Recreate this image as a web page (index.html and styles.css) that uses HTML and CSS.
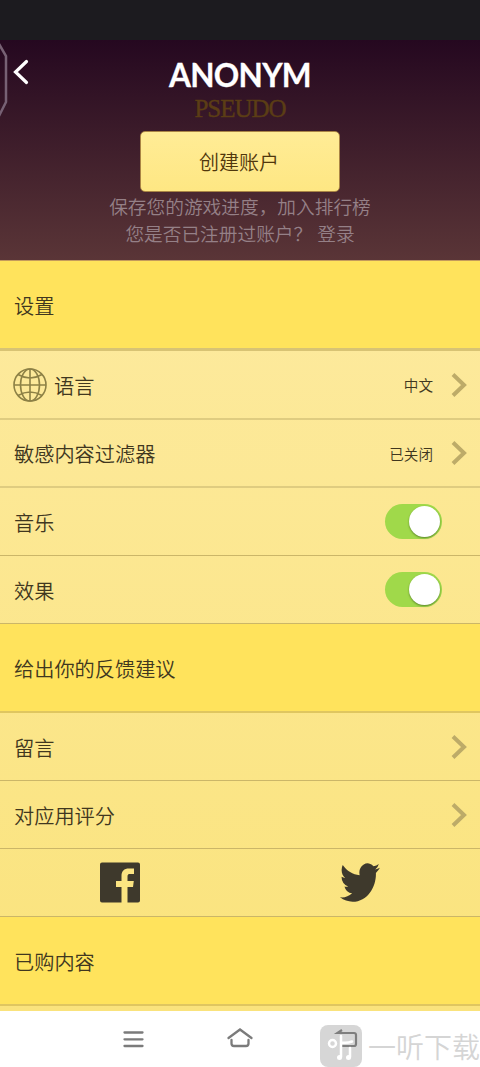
FILE: index.html
```html
<!DOCTYPE html>
<html lang="zh-CN">
<head>
<meta charset="utf-8">
<title>设置</title>
<link rel="stylesheet" href="styles.css">
</head>
<body>
<div class="status-bar"></div>
<header class="header">
  <svg class="edge-handle" width="9" height="78" viewBox="0 0 9 78"><path d="M-1 2 6 14V60L-1 74" fill="none" stroke="#776174" stroke-width="2.500"/></svg>
  <svg class="back" width="18" height="28" viewBox="0 0 18 28"><path d="M14.5 3.500 3.5 14l11 10.500" fill="none" stroke="#fff" stroke-width="3.200" stroke-linecap="round" stroke-linejoin="miter"/></svg>
  <h1 class="name">ANONYM</h1>
  <p class="pseudo">PSEUDO</p>
  <button class="create">创建账户</button>
  <p class="note">保存您的游戏进度，加入排行榜</p>
  <p class="note">您是否已注册过账户？<span class="login">登录</span></p>
</header>
<main class="settings">
  <h2 class="section section-first">设置</h2>
  <div class="row row-language">
    <svg class="globe" width="34" height="34" viewBox="0 0 34 34" fill="none" stroke="#8d8146" stroke-width="1.600"><circle cx="17" cy="17" r="16"/><ellipse cx="17" cy="17" rx="9.500" ry="16"/><path d="M17 1v32M1 17h32M5 6.500q12 7 24 0M5 27.500q12-7 24 0"/></svg>
    <span class="label">语言</span><span class="value">中文</span>
    <svg class="chevron" width="16" height="26" viewBox="0 0 16 26"><path d="M2 2.500 13 13 2 23.500"/></svg>
  </div>
  <div class="row"><span class="label">敏感内容过滤器</span><span class="value">已关闭</span>
    <svg class="chevron" width="16" height="26" viewBox="0 0 16 26"><path d="M2 2.500 13 13 2 23.500"/></svg>
  </div>
  <div class="row row-thin"><span class="label">音乐</span><span class="toggle"><span class="knob"></span></span></div>
  <div class="row row-thin"><span class="label">效果</span><span class="toggle"><span class="knob"></span></span></div>
  <h2 class="section">给出你的反馈建议</h2>
  <div class="row row-thin"><span class="label">留言</span>
    <svg class="chevron" width="16" height="26" viewBox="0 0 16 26"><path d="M2 2.500 13 13 2 23.500"/></svg>
  </div>
  <div class="row row-thin"><span class="label">对应用评分</span>
    <svg class="chevron" width="16" height="26" viewBox="0 0 16 26"><path d="M2 2.500 13 13 2 23.500"/></svg>
  </div>
  <div class="row row-thin row-social">
    <svg width="40" height="41" viewBox="0 0 40 41"><path fill="#3e392c" d="M2 .5h36a2 2 0 0 1 2 2v36a2 2 0 0 1-2 2H27.500V25h5.500l.8-6h-6.300v-4.500c0-2 .8-2.500 2.700-2.500H34V6.500h-5c-5 0-7.500 2.500-7.500 7.500v5H16v6h5.500v15.500H2a2 2 0 0 1-2-2v-36a2 2 0 0 1 2-2z"/></svg>
    <svg width="40" height="41" viewBox="0 1.600 24 20.800" preserveAspectRatio="none"><path fill="#3e392c" d="M23.954 4.569a10 10 0 0 1-2.825.775 4.958 4.958 0 0 0 2.163-2.723c-.951.555-2.005.959-3.127 1.184a4.920 4.920 0 0 0-8.384 4.482C7.691 8.094 4.066 6.130 1.640 3.161a4.822 4.822 0 0 0-.666 2.475c0 1.710.87 3.213 2.188 4.096a4.904 4.904 0 0 1-2.228-.616v.061a4.923 4.923 0 0 0 3.946 4.827 4.996 4.996 0 0 1-2.212.085 4.937 4.937 0 0 0 4.604 3.417 9.868 9.868 0 0 1-6.102 2.105c-.39 0-.779-.023-1.170-.067a13.995 13.995 0 0 0 7.557 2.209c9.054 0 13.999-7.496 13.999-13.986 0-.209 0-.42-.015-.63a9.936 9.936 0 0 0 2.413-2.568z"/></svg>
  </div>
  <h2 class="section">已购内容</h2>
  <div class="peek"></div>
</main>
<nav class="nav">
  <svg class="menu" width="22" height="20" viewBox="0 0 22 20"><path d="M2.500 3.500h18M2.500 10.300h18M2.500 17h18"/></svg>
  <svg class="home" width="28" height="22" viewBox="0 0 28 22"><path d="M2.500 11 14 2.500 25.500 11M5.500 13v3.500q0 2.500 2.500 2.500h12q2.500 0 2.500-2.500V13"/></svg>
  <div class="watermark">
    <svg class="mark" width="42" height="42" viewBox="0 0 42 42"><rect width="42" height="42" rx="8" fill="#d6d6d6"/><path d="M22 5 17.500 8H34q2 0 2 2v9q0 2-2 2H21" fill="none" stroke="#7e7e7e" stroke-width="2.200"/><g fill="none" stroke="#fff" stroke-width="2.500" stroke-linecap="round"><circle cx="12.500" cy="18.500" r="3.500"/><path d="M21 32V11M21 17.500q6 1 11-1M30 32V23"/></g><circle cx="19.500" cy="32.500" r="2.500" fill="#fff"/><circle cx="28.500" cy="32.500" r="2.500" fill="#fff"/></svg>
    <span class="brand">一听下载</span>
  </div>
</nav>
</body>
</html>
```
FILE: styles.css
```css
* { box-sizing: border-box; }
body { margin: 0; width: 480px; height: 1067px; overflow: hidden; background: #fff; font-family: "Noto Sans CJK SC", sans-serif; color: #40371f; }
h1, h2, p { margin: 0; font-weight: 400; }
svg { display: block; flex: none; }
.status-bar { height: 40px; background: #1c1b1f; }
.header { position: relative; height: 221px; display: flex; flex-direction: column; align-items: center; background: linear-gradient(#250820, #5a3537); border-bottom: 1px solid #c49b5c; }
.edge-handle { position: absolute; left: 0; top: 2px; }
.back { position: absolute; left: 12px; top: 18px; }
.name { margin-top: 15px; height: 40px; font: 700 31.500px/40px Lato, sans-serif; letter-spacing: -.7px; color: #fff; white-space: nowrap; -webkit-text-stroke: .3px #fff; }
.pseudo { height: 28px; font: 25px/28px "Liberation Serif", serif; letter-spacing: -1px; color: #5b3d15; -webkit-text-stroke: .4px #5b3d15; }
.create { margin: 8px 0 0; flex: none; width: 200px; height: 61px; padding: 1px 2px 0 0; border: 1px solid #a98445; border-radius: 5px; background: linear-gradient(#ffec96, #fee783); font: 350 20px/30px "Noto Sans CJK SC", sans-serif; color: #50370c; }
.note { height: 27px; font-size: 18.700px; line-height: 27px; font-weight: 350; color: #958087; white-space: nowrap; }
.login { margin-left: 5px; }
.section { height: 89px; padding: 0 14px; background: #ffe35c; border-bottom: 2px solid #dfc660; font-size: 20.200px; line-height: 89px; font-weight: 350; }
.section-first { height: 90px; border-bottom: 3px solid #d8c374; line-height: 90px; }
.settings { background: linear-gradient(#fdea9f, #fae37c); height: 750px; }
.row { height: 68px; display: flex; align-items: center; padding: 0 13px 0 14px; border-bottom: 2px solid #dfcc80; font-size: 20.200px; font-weight: 350; }
.row-thin { border-bottom: 1px solid #cbb668; }
.row-language { height: 69px; padding-left: 13px; }
.globe { margin-right: 7px; }
.label { flex: 1; padding-top: 1px; }
.value { font-size: 14.600px; margin-right: 18px; }
.chevron { fill: none; stroke: #bdab68; stroke-width: 4; }
.toggle { width: 57px; height: 35px; margin-right: 25px; padding: 2px; border-radius: 18px; background: #a0d94a; display: flex; justify-content: flex-end; }
.knob { width: 31px; height: 31px; border-radius: 50%; background: #fff; box-shadow: 0 1px 2px #5c852b; }
.row-social { padding: 0; justify-content: space-around; }
.row-social svg { margin: 0 100px; }
.peek { height: 5px; }
.nav { height: 56px; display: flex; align-items: flex-start; padding-left: 122px; background: #fff; }
.menu, .home { fill: none; stroke: #7b7b7b; stroke-width: 2.300; stroke-linecap: round; }
.menu { margin-top: 18px; }
.home { margin: 16px 0 0 82px; }
.watermark { display: flex; margin: 14px 0 0 66px; }
.brand { margin-left: 6px; font-size: 28px; line-height: 42px; font-weight: 350; color: #d5d5d5; white-space: nowrap; }
```
